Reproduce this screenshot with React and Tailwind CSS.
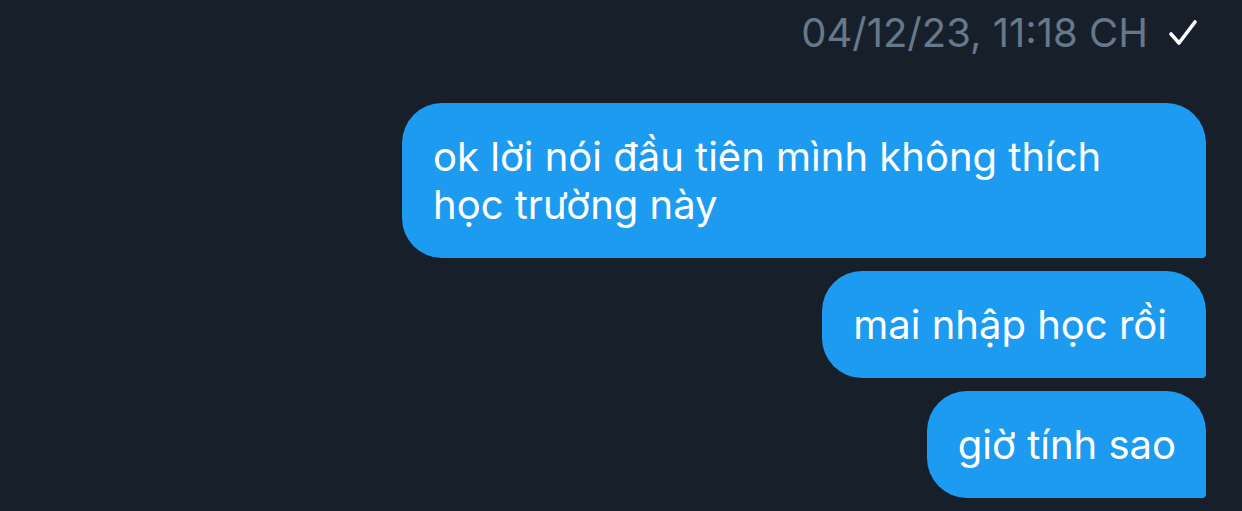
export default function App() {
  const bubble =
    "bg-[#1d9bf0] text-white text-[40px] leading-[48px] rounded-tl-[40px] rounded-tr-[40px] rounded-bl-[40px] rounded-br-[4px] pt-[30px] pb-[29px] pl-[31px]";

  return (
    <div
      className="w-full h-[511px] bg-[#17202a] flex flex-col items-end pr-[36px] overflow-hidden"
      style={{ fontFamily: "Inter, 'Noto Sans', sans-serif" }}
    >
      <div className="flex items-center gap-[20px] mr-[8px] mt-[10px] h-[46px]">
        <span className="text-[40px] text-[#66788a]">04/12/23, 11:18 CH</span>
        <svg width="30" height="30" viewBox="0 0 30 30" fill="none">
          <path
            d="M3 16 L11 25 L27 4"
            stroke="white"
            strokeWidth="3.6"
            strokeLinecap="round"
            strokeLinejoin="round"
          />
        </svg>
      </div>

      <div className={`${bubble} mt-[47px] w-[804px] pr-[80px]`}>
        ok lời nói đầu tiên mình không thích học trường này
      </div>
      <div className={`${bubble} mt-[13px] pr-[39px]`}>mai nhập học rồi</div>
      <div className={`${bubble} mt-[13px] pr-[30px]`}>giờ tính sao</div>
    </div>
  );
}
